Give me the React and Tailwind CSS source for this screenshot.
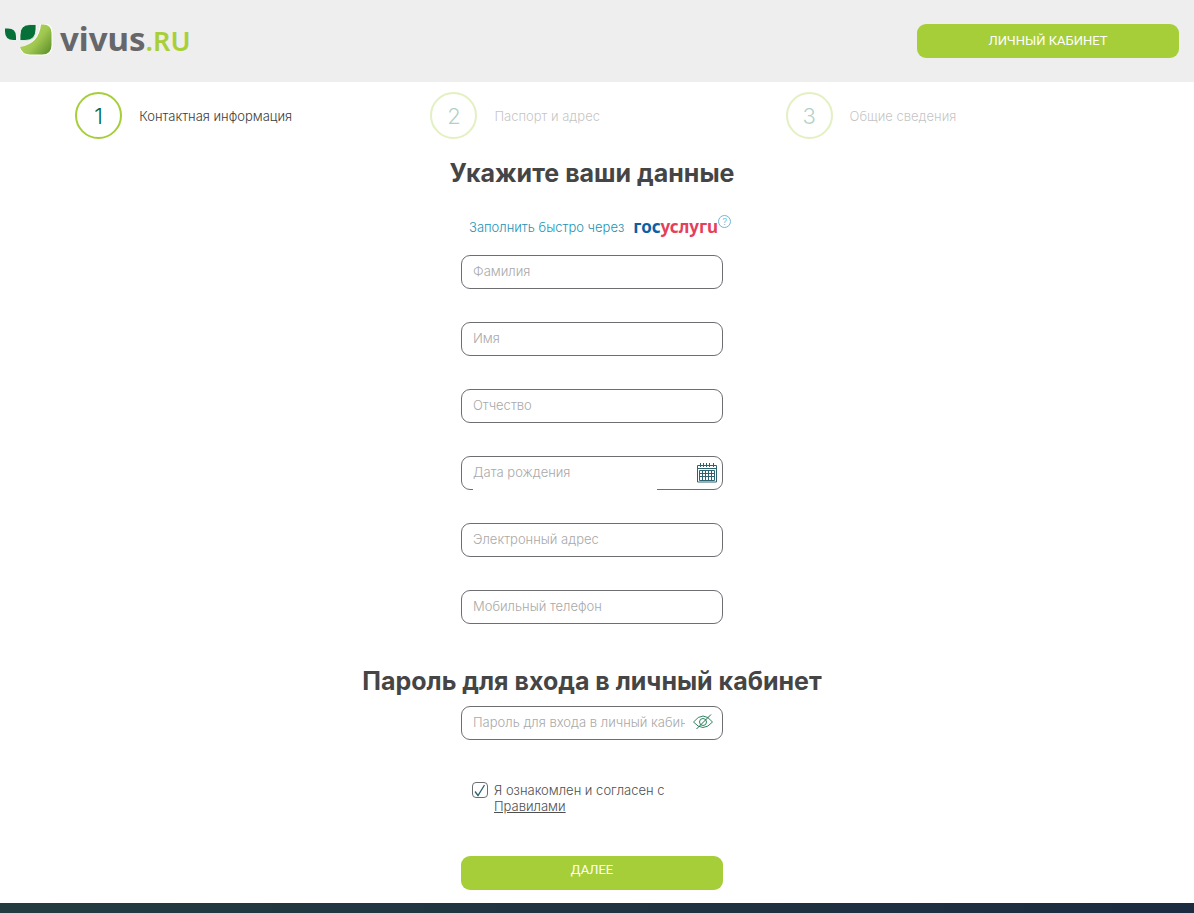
import React from "react";

const steps = [
  { n: 1, label: "Контактная информация", active: true },
  { n: 2, label: "Паспорт и адрес" },
  { n: 3, label: "Общие сведения" },
];

const inputClass =
  "block h-[34px] w-full rounded-[9px] border border-[#6d6e71] bg-transparent px-[11px] pb-0.5 text-[13px] font-light text-[#4a4a4a] outline-none placeholder:text-[#a9a9a9]";

function Logo() {
  return (
    <a href="#" aria-label="vivus.ru" className="flex items-start">
      <svg viewBox="0 0 50 34" className="h-[34px] w-[50px]" aria-hidden="true">
        <defs>
          <linearGradient id="leaf" x1="0.1" y1="0.2" x2="1" y2="0.9">
            <stop offset="0" stopColor="#b5d465" />
            <stop offset="0.5" stopColor="#a0c850" />
            <stop offset="1" stopColor="#5f8f2c" />
          </linearGradient>
        </defs>
        <path d="M35 -.5h4q8.500 0 8.500 8.500v14q0 9.500-9.500 9.500H25q-9 0-10.500-8.500Q34 19 35 -.5z" fill="#fbfdf6" />
        <path d="M36 .5h2q8.500 0 8.500 8.500v12q0 9.500-9.500 9.500H25q-8 0-10-7.500Q34 20 36 .5z" fill="url(#leaf)" />
        <path d="M15 16.500V11Q15 .5 25 .5h6V5q0 11.500-11 11.500z" fill="#067038" stroke="#f8faf6" strokeWidth="0.8" />
        <path d="M0 4.500h3q8 0 8 8v3.500H8.500Q0 16 0 7.500z" fill="#067038" />
      </svg>
      <span className="ml-[5px] flex items-baseline font-['Noto_Sans',sans-serif] leading-[30px]">
        <span className="text-[33px] font-bold text-[#66676b]">vivus</span>
        <span className="text-[27px] font-semibold text-[#a9cf38]">.RU</span>
      </span>
    </a>
  );
}

function CalendarIcon() {
  return (
    <svg viewBox="0 0 20 20" className="size-5" fill="none" stroke="#2d6470" aria-hidden="true">
      <path d="M.5 2.500h19v16.500H.5zM.5 5.500h19" />
      <path d="M3.500 0v4M6.500 0v4M9.500 0v4M12.500 0v4M16.500 0v4" />
      <path d="M2.500 7.500h15v10h-15zM2.500 10.500h15M2.500 13.500h15M5.500 7.500v10M8.500 7.500v10M11.500 7.500v10M14.500 7.500v10" />
    </svg>
  );
}

function EyeOffIcon() {
  return (
    <svg viewBox="0 0 20 16" className="h-4 w-5" fill="none" stroke="#2f8662" strokeWidth="1" aria-hidden="true">
      <path d="M.5 8Q10-4 19.500 8 10 19 .5 8z" />
      <circle cx="10" cy="8" r="3.500" />
      <path d="M3.500 15 18 .5" stroke="#226c4c" />
    </svg>
  );
}

function Field({ label, type = "text", className = "" }) {
  return <input type={type} aria-label={label} placeholder={label} className={`${inputClass} ${className}`} />;
}

export default function App() {
  return (
    <div className="bg-white font-['Inter',sans-serif] text-[13px] font-light leading-4 text-[#3c3c3c]">
      <header className="flex items-center justify-between bg-[#eeeeee] py-6 pr-[15px] pl-[5px]">
        <Logo />
        <button
          type="button"
          className="h-[34px] w-[262px] rounded-[9px] bg-[#a6ce39] font-['Roboto',sans-serif] text-[13px] font-normal text-white"
        >
          ЛИЧНЫЙ КАБИНЕТ
        </button>
      </header>

      <div className="pr-[10px]">
        <ol className="mx-auto grid w-[90%] grid-cols-3 pt-[10px]">
          {steps.map((s) => (
            <li key={s.n} className={`flex items-center pl-4 ${s.active ? "" : "opacity-30"}`}>
              <span className="flex size-[47px] items-center justify-center rounded-full border-2 border-[#a6ce39] text-[22px] text-[#006845]">
                {s.n}
              </span>
              <span className="ml-[17px]">{s.label}</span>
            </li>
          ))}
        </ol>

        <form className="flex flex-col items-center" onSubmit={(e) => e.preventDefault()}>
          <h2 className="mt-[18px] text-[25px] leading-8 font-bold text-[#454545]">Укажите ваши данные</h2>

          <div className="mt-[26px] flex h-10 w-[262px] items-start pl-2">
            <a href="#" className="flex items-center pt-0.5 text-[#2493b5]">
              <span className="whitespace-nowrap">Заполнить быстро через</span>
              <span className="ml-[9px] font-['Noto_Sans',sans-serif] text-[17px] leading-5 font-bold text-[#0b5fa5]">
                гос<span className="text-[#e5405a]">услугu</span>
              </span>
            </a>
            <button
              type="button"
              aria-label="Подсказка"
              className="flex size-[13px] shrink-0 items-center justify-center rounded-full border border-[#6bb7d3] text-[9px] leading-none text-[#4aa5c8]"
            >
              ?
            </button>
          </div>

          <div className="flex w-[262px] flex-col gap-[33px]">
            <Field label="Фамилия" />
            <Field label="Имя" />
            <Field label="Отчество" />
            <div className="relative">
              <Field label="Дата рождения" />
              <span className="absolute bottom-0 left-3 h-px w-[184px] bg-white" />
              <button type="button" aria-label="Открыть календарь" className="absolute top-[7px] right-[6px]">
                <CalendarIcon />
              </button>
            </div>
            <Field label="Электронный адрес" type="email" />
            <Field label="Мобильный телефон" type="tel" />
          </div>

          <h2 className="mt-[41px] text-[25px] leading-8 font-bold text-[#454545]">
            Пароль для входа в личный кабинет
          </h2>
          <div className="relative mt-[9px] w-[262px]">
            <Field label="Пароль для входа в личный кабинет" type="password" className="pr-[37px]" />
            <button type="button" aria-label="Показать пароль" className="absolute top-2 right-[10px]">
              <EyeOffIcon />
            </button>
          </div>

          <label className="mt-[42px] flex w-[262px] items-start pl-[11px] text-[#4f4f4f]">
            <span className="relative size-4 shrink-0">
              <input
                type="checkbox"
                defaultChecked
                className="peer block size-4 appearance-none rounded-[4px] border border-[#6d6e71]"
              />
              <svg
                viewBox="0 0 16 16"
                className="pointer-events-none absolute inset-0 hidden size-4 peer-checked:block"
                fill="none"
                stroke="#2d6470"
                strokeWidth="1.300"
                aria-hidden="true"
              >
                <path d="M3 9.500 6 13.500 12.500 3" />
              </svg>
            </span>
            <span className="ml-[6px] w-[180px]">
              Я ознакомлен и согласен с{" "}
              <a href="#" className="underline">
                Правилами
              </a>
            </span>
          </label>

          <button
            type="submit"
            className="mt-[42px] mb-[13px] h-[34px] w-[262px] rounded-[9px] bg-[#a6ce39] pb-[6px] font-['Roboto',sans-serif] text-[13px] font-normal text-white"
          >
            ДАЛЕЕ
          </button>
        </form>
      </div>

      <footer className="h-[10px] bg-linear-to-r from-[#223b40] to-[#1c2b40]" />
    </div>
  );
}
